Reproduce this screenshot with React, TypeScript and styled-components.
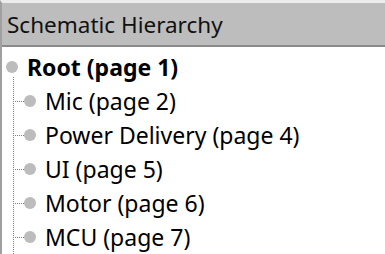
import React from "react";
import styled, { createGlobalStyle } from "styled-components";

const Global = createGlobalStyle`
  html, body { margin: 0; padding: 0; background: #fff; }
  body { font-family: "Noto Sans", "Open Sans", sans-serif; }
`;

const Panel = styled.div`
  width: 385px;
  height: 254px;
  box-sizing: border-box;
  border-left: 2px solid #a0a0a0;
  border-top: 3px solid #ececec;
  display: flex;
  flex-direction: column;
  overflow: hidden;
`;

const Header = styled.div`
  height: 42px;
  background: #bdbdbd;
  border-bottom: 2px solid #8a8a8a;
  display: flex;
  align-items: center;
  padding-left: 5px;
  font-size: 22.5px;
  color: #111;
  box-sizing: content-box;
`;

const Tree = styled.div`
  position: relative;
  flex: 1;
  padding-top: 3px;
`;

const Row = styled.div<{ $child?: boolean }>`
  display: flex;
  align-items: center;
  height: 34px;
  padding-left: ${(p) => (p.$child ? "22px" : "4px")};
  position: relative;
`;

const Bullet = styled.span`
  width: 12px;
  height: 12px;
  border-radius: 50%;
  background: #bcbcbc;
  flex: none;
  margin-right: 9px;
`;

const Label = styled.span<{ $bold?: boolean }>`
  font-size: 23px;
  font-weight: ${(p) => (p.$bold ? 700 : 400)};
  color: #000;
  white-space: nowrap;
`;

const HLine = styled.span`
  position: absolute;
  left: 11px;
  top: 50%;
  width: 11px;
  border-top: 1px dotted #808080;
`;

const VLine = styled.span`
  position: absolute;
  left: 11px;
  top: 30px;
  bottom: 0;
  border-left: 1px dotted #808080;
`;

const children = [
  "Mic (page 2)",
  "Power Delivery (page 4)",
  "UI (page 5)",
  "Motor (page 6)",
  "MCU (page 7)",
];

export default function App() {
  return (
    <>
      <Global />
      <Panel>
        <Header>Schematic Hierarchy</Header>
        <Tree>
          <VLine />
          <Row>
            <Bullet />
            <Label $bold>Root (page 1)</Label>
          </Row>
          {children.map((c) => (
            <Row $child key={c}>
              <HLine />
              <Bullet />
              <Label>{c}</Label>
            </Row>
          ))}
        </Tree>
      </Panel>
    </>
  );
}
